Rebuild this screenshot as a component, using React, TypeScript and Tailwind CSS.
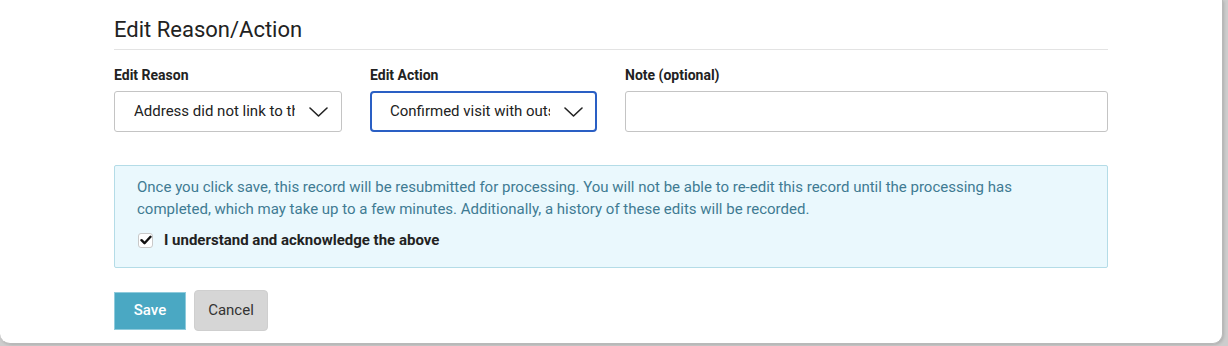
import React from 'react';

const Chevron: React.FC = () => (
  <svg width="19" height="10" viewBox="0 0 19 10" fill="none" className="shrink-0">
    <path d="M1 1l8.5 8 8.5-8" stroke="#222" strokeWidth="1.6" strokeLinecap="round" strokeLinejoin="round" />
  </svg>
);

export default function App() {
  const selects = [
    { label: 'Edit Reason', value: 'Address did not link to the correct site', focused: false },
    { label: 'Edit Action', value: 'Confirmed visit with outside provider', focused: true },
  ];

  return (
    <div className="w-[1228px] h-[346px] bg-[#cdcdcd] overflow-hidden font-['Roboto',sans-serif]">
      <div className="w-[1223px] h-[344px] bg-white rounded-b-[10px] border-r border-b border-[#b9b9b9] shadow-[1px_1px_3px_rgba(0,0,0,0.15)] pl-[114px] pr-[114px]">
        {/* Heading */}
        <div className="pt-[18px] pb-[8px] border-b border-[#e3e3e3]">
          <h2 className="text-[22px] leading-[23px] text-[#222]">Edit Reason/Action</h2>
        </div>

        {/* Fields */}
        <div className="grid grid-cols-[228px_227px_483px] gap-x-[28px] mt-[17px]">
          {selects.map((s) => (
            <div key={s.label}>
              <label className="block text-[14px] leading-[17px] font-bold text-[#222] mb-[7px]">{s.label}</label>
              <div
                className={
                  s.focused
                    ? 'h-[41px] rounded-[4px] border-2 border-[#2a5fc4] flex items-center pl-[18px] pr-[12px] bg-white'
                    : 'h-[41px] rounded-[3px] border border-[#c4c4c4] flex items-center pl-[19px] pr-[13px] bg-white'
                }
              >
                <span className="flex-1 overflow-hidden whitespace-nowrap text-[15px] text-[#222] mr-[14px]">{s.value}</span>
                <Chevron />
              </div>
            </div>
          ))}
          <div>
            <label className="block text-[14px] leading-[17px] font-bold text-[#222] mb-[7px]">Note (optional)</label>
            <div className="h-[41px] rounded-[3px] border border-[#c4c4c4] bg-white" />
          </div>
        </div>

        {/* Info alert */}
        <div className="mt-[33px] h-[103px] border border-[#b4dce7] rounded-[2px] bg-[#eaf8fd] pl-[22px] pr-[16px] pt-[10px]">
          <p className="text-[15px] leading-[22px] text-[#3f7b93] whitespace-nowrap">
            Once you click save, this record will be resubmitted for processing. You will not be able to re-edit this record until the processing has
            <br />
            completed, which may take up to a few minutes. Additionally, a history of these edits will be recorded.
          </p>
          <label className="flex items-center gap-[11px] mt-[9px] pl-[1px]">
            <span className="w-[15px] h-[15px] rounded-[3px] border border-[#c9c9c9] bg-white flex items-center justify-center">
              <svg width="12" height="10" viewBox="0 0 12 10">
                <path d="M1.5 5.2l3 3 6-6.4" stroke="#111" strokeWidth="2.4" fill="none" strokeLinecap="round" strokeLinejoin="round" />
              </svg>
            </span>
            <span className="text-[15px] font-bold text-[#222]">I understand and acknowledge the above</span>
          </label>
        </div>

        {/* Actions */}
        <div className="flex items-center gap-[8px] mt-[22px]">
          <button className="w-[72px] h-[38px] bg-[#4aa8c3] border border-[#8fcbdc] text-white text-[15px] font-medium">
            Save
          </button>
          <button className="w-[74px] h-[41px] bg-[#d6d6d6] border border-[#cfcfcf] rounded-[4px] text-[#333] text-[15px]">
            Cancel
          </button>
        </div>
      </div>
    </div>
  );
}
